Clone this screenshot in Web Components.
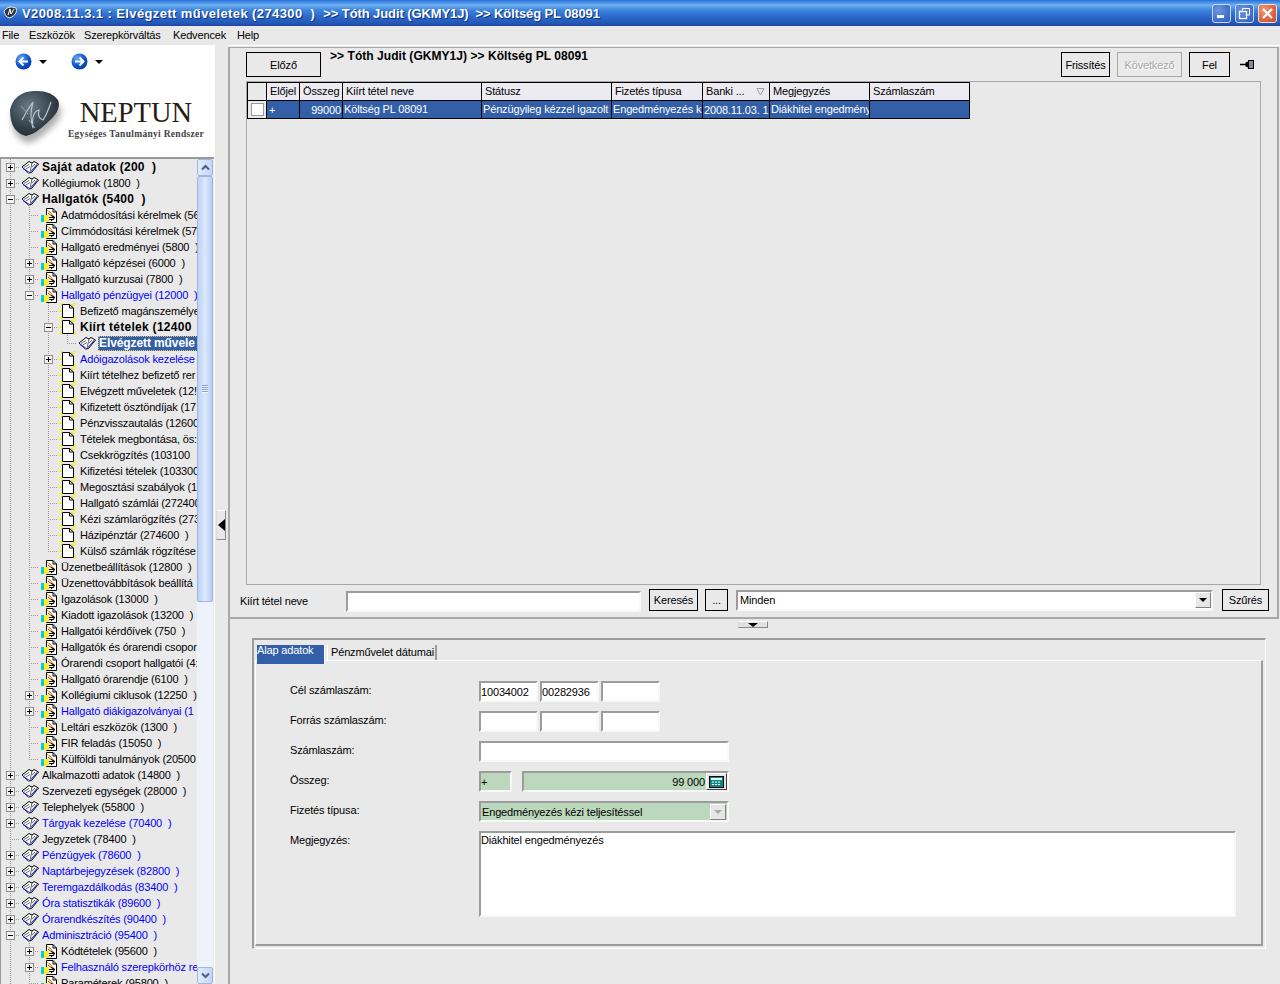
<!DOCTYPE html>
<html lang="hu"><head><meta charset="utf-8"><title>Neptun</title>
<style>
html,body{margin:0;padding:0;background:#e9e9e9}
body{width:1280px;height:984px;overflow:hidden;font:11px "Liberation Sans",Arial,sans-serif;letter-spacing:-.15px;color:#000}
</style></head><body>
<neptun-app></neptun-app>
<script>
const ICONS={
book:`<svg width="18" height="14" viewBox="0 0 18 14"><path d="M1 7 8 1.500 11 3 13 1.500 17.500 4 10.500 12.500 7.500 13Z" fill="#fff" stroke="#000"/><path d="M11 3 9 12.500M3 7.500 8 4.500M5 9 9 6.500M11 7 14 4" fill="none" stroke="#000" stroke-width=".6"/><path d="M2 8.500 7.500 12M10 11.500 16 4.500" fill="none" stroke="#2030c8" stroke-width="1.100"/></svg>`,
doc:`<svg width="18" height="17" viewBox="0 0 18 17"><path d="M6.500 1.500H13L16.500 5V15.500H6.500Z" fill="#fff" stroke="#000"/><path d="M13 1.500V5H16.500" fill="none" stroke="#000"/><path d="M8 6 13 10M9 4 12 7" stroke="#c8102e" stroke-width="1"/><path d="M7 3 14 9" stroke="#e8d000" stroke-width="1"/><path d="M8 10.500H15M8 12.500H14M11 8 15 10.500 11 14" fill="none" stroke="#000"/><rect x="1" y="8" width="4" height="7" fill="#10c8d8"/><rect x="4" y="8" width="5" height="7" fill="#f5ee30"/></svg>`,
page:`<svg width="18" height="16" viewBox="0 0 18 16"><path d="M2 0 6 4M16 0 13 3M1 15 5 12M17 15 13 12M0 8H4" stroke="#f8f000" stroke-width="1.800" fill="none"/><path d="M3.500 1.500H10.500L14.500 5V14.500H3.500Z" fill="#fff" stroke="#000"/><path d="M10.500 1.500V5H14.500" fill="none" stroke="#000"/></svg>`
};
function def(name,css,html,init){
  customElements.define(name,class extends HTMLElement{
    connectedCallback(){
      if(this.shadowRoot)return;
      const r=this.attachShadow({mode:'open'});
      r.innerHTML=`<style>${css}</style>`+(typeof html==='function'?html(this):html);
      if(init)init(this,r);
    }
  });
}
def('neptun-titlebar',`
:host{display:flex;align-items:center;height:26px;background:linear-gradient(#2a6fd8 0,#3f8ae6 2px,#6fb0ee 5px,#3c85de 10px,#2a68c8 17px,#2558b8 23px,#1d47a0 26px);color:#fff;padding-left:3px;box-sizing:border-box}
svg.l{margin-right:4px;flex:none}
.t{font-weight:bold;font-size:13px;letter-spacing:.4px;white-space:pre;text-shadow:1px 1px 0 #0f2f80;flex:1}
.t span{letter-spacing:-.1px}
.b{width:19px;height:19px;box-sizing:border-box;border:1px solid #c8d8f4;border-radius:3px;margin-right:4px;background:radial-gradient(circle at 30% 30%,#6b95e0,#2c5cc0);display:flex;align-items:center;justify-content:center}
.b.x{background:radial-gradient(circle at 30% 30%,#ee9878,#cf4420);margin-right:3px;border-color:#f0e0d8}
`,`<svg class="l" width="15" height="14" viewBox="0 0 15 14"><path d="M1 5Q5-1 13 2 15 7 9 11 3 14 1 5Z" fill="#2e3a42" stroke="#dfe6ee"/><path d="M5 9 7 3 8 8 11 3" stroke="#fff" fill="none"/></svg>
<div class="t">V2008.11.3.1 : Elvégzett műveletek (274300  )  <span>&gt;&gt; Tóth Judit (GKMY1J)  &gt;&gt; Költség PL 08091</span></div>
<div class="b"><svg width="11" height="11" viewBox="0 0 11 11"><rect x="1" y="7" width="7" height="3" fill="#fff"/></svg></div>
<div class="b"><svg width="13" height="13" viewBox="0 0 13 13"><path d="M4.500 3.500V1.500H11.500V8H9" fill="none" stroke="#fff"/><rect x="1.500" y="4.500" width="7" height="7" fill="none" stroke="#fff" stroke-width="1.300"/></svg></div>
<div class="b x"><svg width="13" height="13" viewBox="0 0 13 13"><path d="M2 2 11 11M11 2 2 11" stroke="#fff" stroke-width="2.200"/></svg></div>`);
def('neptun-menubar',`
:host{display:flex;height:19px;align-items:center;background:#e9e9e9;box-sizing:border-box;padding:0 0 2px 2px}
span{white-space:pre}
`,`<span style="width:27px">File</span><span style="width:55px">Eszközök</span><span style="width:89px">Szerepkörváltás</span><span style="width:64px">Kedvencek</span><span>Help</span>`);
def('neptun-nav',`
:host{display:flex;align-items:center;height:33px;padding-left:15px;box-sizing:border-box}
.tri{width:0;height:0;border:4px solid transparent;border-top:4px solid #000;border-bottom:0;margin-left:7px;margin-right:32px}
.tri.a{margin-right:24px}
`,()=>{
 const c=(d)=>`<svg width="17" height="17" viewBox="0 0 17 17"><defs><radialGradient id="g${d}" cx=".35" cy=".3" r=".8"><stop offset="0" stop-color="#6aa8f0"/><stop offset=".6" stop-color="#0a55d0"/><stop offset="1" stop-color="#0838a0"/></radialGradient></defs><circle cx="8.500" cy="8.500" r="8" fill="url(#g${d})"/><path d="${d=='l'?'M13 8.500H5M8.500 4.500 4.500 8.500 8.500 12.500':'M4 8.500H12M8.500 4.500 12.500 8.500 8.500 12.500'}" stroke="#fff" stroke-width="2" fill="none"/></svg>`;
 return c('l')+'<span class="tri a"></span>'+c('r')+'<span class="tri"></span>';
});
def('neptun-logo',`
:host{display:flex;height:79px;box-sizing:border-box;padding:12px 0 0 7px;font-family:"Liberation Serif",serif;color:#2a1c14;letter-spacing:0}
.w{width:136px;display:flex;flex-direction:column;align-items:center;margin-top:6px}
.n{font-size:28.5px;line-height:33px;white-space:pre}
.s{font-size:9.500px;font-weight:bold;white-space:pre;margin-top:0;letter-spacing:.3px;color:#444;line-height:11px}
`,`<svg width="61" height="62" viewBox="0 0 61 62"><defs><radialGradient id="st" cx=".4" cy=".35" r=".75"><stop offset="0" stop-color="#6b7b88"/><stop offset=".55" stop-color="#3a4852"/><stop offset="1" stop-color="#1a2228"/></radialGradient><filter id="b" x="-30%" y="-30%" width="160%" height="160%"><feGaussianBlur stdDeviation="3"/></filter></defs><path d="M4 22Q8 4 28 3 44 2 52 12 56 22 42 34 30 46 20 48 4 44 4 22Z" fill="#777" opacity=".6" filter="url(#b)" transform="translate(1 5)"/><path d="M3 20Q7 2 27 1 44 0 51 10 55 20 41 32 29 44 19 46 3 42 3 20Z" fill="url(#st)"/><path d="M15 30Q20 20 26 12 22 26 26 38 24 22 32 20 30 28 36 30 40 24 44 12" fill="none" stroke="#b8c4cc" stroke-width="1.200"/><path d="M14 16 21 24M22 30 28 38" stroke="#98a4ac" fill="none"/></svg>
<div class="w"><span class="n">NEPTUN</span><span class="s">Egységes Tanulmányi Rendszer</span></div>`);
def('neptun-node',`
:host{display:flex;height:16px;align-items:center;white-space:pre;box-sizing:border-box}
.c{flex:none;width:19px;height:16px;display:flex;align-items:center;justify-content:center}
.g{background:repeating-linear-gradient(#9a9a9a 0 1px,transparent 1px 2px) 9px 0/1px 16px no-repeat}
.h{background-image:repeating-linear-gradient(#9a9a9a 0 1px,transparent 1px 2px),repeating-linear-gradient(90deg,#9a9a9a 0 1px,transparent 1px 2px);background-size:1px 16px,10px 1px;background-position:9px 0,9px 8px;background-repeat:no-repeat}
.hu{background-image:repeating-linear-gradient(#9a9a9a 0 1px,transparent 1px 2px),repeating-linear-gradient(90deg,#9a9a9a 0 1px,transparent 1px 2px);background-size:1px 9px,10px 1px;background-position:9px 0,9px 8px;background-repeat:no-repeat}
.e{width:9px;height:9px;box-sizing:border-box;border:1px solid #8c8c8c;background:#f4f4f4;display:block}
.i{flex:none;width:19px;height:16px;display:flex;align-items:center;justify-content:center}
.t{margin-left:3px;flex:1;overflow:hidden;line-height:16px}
:host([bold]) .t{font-weight:bold;font-size:12px;letter-spacing:.28px}
:host([blue]) .t{color:#0000ff}
.t b{font-weight:inherit}
:host([sel]) .t{margin-left:2px;letter-spacing:-.1px}
:host([sel]) .t b{display:inline-block;background:#335fa8;color:#fff;outline:1px dotted #e8c060;outline-offset:-1px;padding:0 1px;min-width:100px;line-height:15px}
`,(h)=>{
 const g=(h.getAttribute('g')||'').split('');
 const exp=h.getAttribute('e');
 let s='';
 g.forEach(x=>{s+=`<span class="c ${x==='1'?'g':''}"></span>`});
 const last=h.hasAttribute('last');
 const ex=exp==='+'?`<svg class="e" viewBox="0 0 7 7"><path d="M1 3.500H6M3.500 1V6" stroke="#000"/></svg>`:exp==='-'?`<svg class="e" viewBox="0 0 7 7"><path d="M1 3.500H6" stroke="#000"/></svg>`:'';
 s+=`<span class="c ${last?'hu':'h'}">${ex}</span>`;
 s+=`<span class="i">${ICONS[h.getAttribute('i')]}</span>`;
 s+=`<span class="t"><b><slot></slot></b></span>`;
 return s;
});
def('neptun-scrollbar',`
:host{display:flex;flex-direction:column;width:16px;flex:none;background:#eef2fa;box-sizing:border-box}
.u{height:17px;flex:none;box-sizing:border-box;border:1px solid #9fb6e0;border-radius:2px;background:linear-gradient(90deg,#e4ecfb,#c4d6f6);display:flex;align-items:center;justify-content:center}
.th{height:426px;flex:none;box-sizing:border-box;border:1px solid #9fb6e0;border-radius:2px;background:linear-gradient(90deg,#bcd2f6,#dce8fc 50%,#b8cef4);display:flex;align-items:center;justify-content:center}
.sp{flex:1}
.gr{width:6px;height:8px;background:repeating-linear-gradient(#8aa0cc 0 1px,#eef3fc 1px 2px)}
`,`<div class="u"><svg width="9" height="7" viewBox="0 0 9 7"><path d="M1 5.500 4.500 2 8 5.500" fill="none" stroke="#4d6185" stroke-width="2"/></svg></div><div class="th"><span class="gr"></span></div><div class="sp"></div><div class="u"><svg width="9" height="7" viewBox="0 0 9 7"><path d="M1 1.500 4.500 5 8 1.500" fill="none" stroke="#4d6185" stroke-width="2"/></svg></div>`);
def('neptun-tree',`
:host{display:flex;height:827px;box-sizing:border-box;border-top:2px solid #9a9a9a;border-left:1px solid #9a9a9a;width:214px;background:#e9e9e9;overflow:hidden}
.l{width:196px;flex:none;overflow:hidden;height:825px}
`,`<div class="l"><slot></slot></div><neptun-scrollbar></neptun-scrollbar>`);
def('neptun-left',`
:host{display:block;width:215px;flex:none;background:#fff;height:100%;overflow:hidden}
`,`<neptun-nav></neptun-nav><neptun-logo></neptun-logo><slot></slot>`);
def('neptun-divider',`
:host{display:block;width:13px;flex:none;padding-top:465px;padding-left:1px;box-sizing:border-box}
.h{width:10px;height:30px;box-sizing:border-box;background:#e8e8ec;border:1px solid;border-color:#fff #888 #888 #ddd;display:flex;align-items:center;justify-content:center}
i{display:block;border:6px solid transparent;border-right:7px solid #000;border-left:0}
`,`<div class="h"><i></i></div>`);
def('neptun-btn',`
:host{display:flex;align-items:center;justify-content:center;box-sizing:border-box;border:1px solid #000;height:25px;flex:none;white-space:pre}
:host([off]){border-color:#a8a8a8;color:#a8a8a8;text-shadow:1px 1px 0 #fff}
`,`<slot></slot>`);
def('neptun-grid',`
:host{display:block;width:1015px;height:504px;box-sizing:border-box;border:1px solid #a8a8a8;flex:none;background:#e9e9e9}
.g{display:grid;grid-template-columns:19px 33px 43px 139px 130px 91px 67px 100px 100px;grid-auto-rows:18px;width:722px;border-top:1px solid #000;border-left:1px solid #000;margin:0}
.c{border-right:1px solid #000;border-bottom:1px solid #000;overflow:hidden;white-space:pre;display:flex;align-items:center;box-sizing:border-box}
.h{background:#ecebf1;padding:0 0 1px 3px}
.h.first{background:#e9e9e9}
.d{background:#335fa8;color:#fff;padding-left:1px;padding-bottom:2px}
.ck{background:#e9e9e9;justify-content:center}
.ck i{width:13px;height:13px;box-sizing:border-box;background:#fff;border:1px solid #9a9a9a;display:block}
.r{justify-content:flex-end;padding-right:1px;padding-bottom:0}
.s{flex:1}
`,`<div class="g">
<div class="c h first"></div><div class="c h">Előjel</div><div class="c h">Összeg</div><div class="c h">Kiírt tétel neve</div><div class="c h">Státusz</div><div class="c h">Fizetés típusa</div><div class="c h">Banki ...<span class="s"></span><svg width="9" height="9" viewBox="0 0 9 9" style="margin-right:4px"><path d="M1 1.500H8L4.500 8Z" fill="none" stroke="#a0a0a0"/></svg></div><div class="c h">Megjegyzés</div><div class="c h">Számlaszám</div>
<div class="c ck"><i></i></div><div class="c d" style="padding-left:2px;padding-bottom:0">+</div><div class="c d r">99000</div><div class="c d">Költség PL 08091</div><div class="c d">Pénzügyileg kézzel igazolt</div><div class="c d">Engedményezés k</div><div class="c d" style="padding-bottom:0">2008.11.03. 1</div><div class="c d">Diákhitel engedmény</div><div class="c d"></div>
</div>`);
def('neptun-field',`
:host{display:flex;align-items:center;box-sizing:border-box;height:21px;background:#fff;border:2px solid;border-color:#9c9c9c #f8f8f8 #f8f8f8 #9c9c9c;padding:0;white-space:pre;overflow:hidden;flex:none}
:host([green]){background:#bcd8bc}
:host([top]){align-items:flex-start;padding-top:1px}
:host([right]){justify-content:flex-end}
`,`<slot></slot>`);
def('neptun-arrow',`
:host{display:flex;width:16px;height:16px;box-sizing:border-box;flex:none;background:#e6e6e6;border:1px solid;border-color:#fff #808080 #808080 #fff;align-items:center;justify-content:center;margin-left:auto}
i{border:4px solid transparent;border-top:4px solid #000;border-bottom:0;display:block}
:host([off]) i{border-top-color:#a8a8a8}
`,`<i></i>`);
def('neptun-upper',`
:host{display:flex;flex-direction:column;box-sizing:border-box;height:572px;margin-top:1px;border:solid #a8a8a8;border-width:1px 2px 2px 2px;padding:4px 8px 0 10px;width:1051px}
.top{display:flex;margin-left:6px;width:1015px;height:25px;flex:none}
.title{font-weight:bold;font-size:12px;letter-spacing:.05px;white-space:pre;margin:-3px 0 0 9px;line-height:14px}
.sp{flex:1}
.pin{width:31px;flex:none;display:flex;align-items:center;justify-content:center;padding-left:3px;box-sizing:border-box}
neptun-grid{margin:4px 0 0 6px}
.f{display:flex;margin-top:4px;height:22px;align-items:center}
.lab{width:106px;white-space:pre;flex:none;margin-top:2px}
`,`<div class="top"><neptun-btn style="width:75px">Előző</neptun-btn><div class="title">&gt;&gt; Tóth Judit (GKMY1J) &gt;&gt; Költség PL 08091</div><div class="sp"></div>
<neptun-btn style="width:49px;margin-right:7px">Frissítés</neptun-btn><neptun-btn off style="width:65px;margin-right:7px">Következő</neptun-btn><neptun-btn style="width:41px">Fel</neptun-btn>
<div class="pin"><svg width="15" height="11" viewBox="0 0 15 11"><path d="M0 5.500H6" stroke="#000" stroke-width="1.500"/><path d="M5.500 3.500 8 2.500V8.500L5.500 7.500Z" fill="#000"/><rect x="8.500" y="1.500" width="5" height="8" fill="#889" stroke="#000"/></svg></div></div>
<neptun-grid></neptun-grid>
<div class="f"><span class="lab">Kiírt tétel neve</span><neptun-field style="width:295px;margin-top:2px"></neptun-field>
<neptun-btn style="width:49px;height:22px;margin-left:8px">Keresés</neptun-btn><neptun-btn style="width:23px;height:22px;margin-left:7px">...</neptun-btn>
<neptun-field style="width:477px;margin-left:8px;padding-left:2px">Minden<neptun-arrow></neptun-arrow></neptun-field>
<neptun-btn style="width:47px;height:22px;margin-left:9px">Szűrés</neptun-btn></div>`);
def('neptun-lower',`
:host{display:flex;flex-direction:column;flex:1;box-sizing:border-box;border-left:2px solid #a8a8a8;width:1053px}
.hd{width:30px;height:7px;margin:2px 0 0 508px;box-sizing:border-box;background:#e0e0e6;border:1px solid;border-color:#fff #888 #888 #ddd;display:flex;justify-content:center;align-items:center;flex:none}
.hd i{border:5px solid transparent;border-top:4px solid #000;border-bottom:0}
.box{margin:10px 0 0 22px;width:1014px;height:311px;box-sizing:border-box;border:solid;border-width:2px 1px 1px 2px;border-color:#9c9c9c #fff #fff #9c9c9c;padding:5px 2px 2px 1px;flex:none;display:flex;flex-direction:column}
.tabs{display:flex;height:15px;flex:none;padding-left:2px;align-items:flex-start}
.tab{white-space:pre;box-sizing:border-box}
.a{width:68px;height:19px;background:#335fa8;color:#fff;line-height:11px;position:relative;z-index:1;border-right:1px solid #fff}
.b{width:110px;height:15px;margin-left:2px;line-height:15px;padding:0 0 0 3px;border-right:2px solid #9c9c9c;border-left:1px solid #fff}
.panel{flex:1;box-sizing:border-box;border:solid;border-width:1px 2px 2px 1px;border-color:#fff #9c9c9c #9c9c9c #fff;padding:20px 0 0 34px;display:grid;grid-template-columns:189px 1fr;grid-template-rows:repeat(5,21px) 86px;row-gap:9px;align-items:start}
.lb{white-space:pre;line-height:18px}
.row{display:flex}
.calc{width:21px;height:17px;box-sizing:border-box;background:#e6e6e6;border:1px solid;border-color:#fff #404040 #404040 #fff;display:flex;align-items:center;justify-content:center;margin-left:1px}
`,`<div class="hd"><i></i></div>
<div class="box"><div class="tabs"><div class="tab a">Alap adatok</div><div class="tab b">Pénzművelet dátumai</div></div>
<div class="panel">
<span class="lb">Cél számlaszám:</span><div class="row" style="gap:2px"><neptun-field style="width:59px">10034002</neptun-field><neptun-field style="width:59px">00282936</neptun-field><neptun-field style="width:59px"></neptun-field></div>
<span class="lb">Forrás számlaszám:</span><div class="row" style="gap:2px"><neptun-field style="width:59px"></neptun-field><neptun-field style="width:59px"></neptun-field><neptun-field style="width:59px"></neptun-field></div>
<span class="lb">Számlaszám:</span><neptun-field style="width:250px"></neptun-field>
<span class="lb">Összeg:</span><div class="row"><neptun-field green style="width:33px">+</neptun-field><neptun-field green right style="width:207px;margin-left:10px;padding:0">99 000<span class="calc"><svg width="15" height="12" viewBox="0 0 15 12"><rect x=".5" y=".5" width="14" height="11" fill="#108888" stroke="#000"/><rect x="2" y="2" width="11" height="2" fill="#dff"/><path d="M3 6H12M3 8.500H12" stroke="#fff" stroke-dasharray="2 1"/></svg></span></neptun-field></div>
<span class="lb">Fizetés típusa:</span><neptun-field green style="width:250px;padding:0 1px">Engedményezés kézi teljesítéssel<neptun-arrow off></neptun-arrow></neptun-field>
<span class="lb">Megjegyzés:</span><neptun-field top style="width:757px;height:86px">Diákhitel engedményezés</neptun-field>
</div></div>`);
def('neptun-app',`
:host{display:flex;flex-direction:column;width:1280px;height:984px}
.m{display:flex;flex:1;min-height:0}
.r{display:flex;flex-direction:column;flex:1;border-top:1px solid #fff;box-sizing:border-box;min-width:0}
`,()=>{
 const rows=[
 ['',"+",'book','b','','Saját adatok (200  )'],
 ['',"+",'book','','','Kollégiumok (1800  )'],
 ['',"-",'book','b','','Hallgatók (5400  )'],
 ['1','','doc','','','Adatmódosítási kérelmek (56'],
 ['1','','doc','','','Címmódosítási kérelmek (57'],
 ['1','','doc','','','Hallgató eredményei (5800  )'],
 ['1','+','doc','','','Hallgató képzései (6000  )'],
 ['1','+','doc','','','Hallgató kurzusai (7800  )'],
 ['1','-','doc','','u','Hallgató pénzügyei (12000  )'],
 ['11','','page','','','Befizető magánszemélye'],
 ['11','-','page','b','','Kiírt tételek (12400'],
 ['111','','book','','sl','Elvégzett művele'],
 ['11','+','page','','u','Adóigazolások kezelése'],
 ['11','','page','','','Kiírt tételhez befizető rer'],
 ['11','','page','','','Elvégzett műveletek (12!'],
 ['11','','page','','','Kifizetett ösztöndíjak (17'],
 ['11','','page','','','Pénzvisszautalás (12600'],
 ['11','','page','','','Tételek megbontása, ös:'],
 ['11','','page','','','Csekkrögzítés (103100'],
 ['11','','page','','','Kifizetési tételek (103300'],
 ['11','','page','','','Megosztási szabályok (1'],
 ['11','','page','','','Hallgató számlái (272400'],
 ['11','','page','','','Kézi számlarögzítés (273'],
 ['11','','page','','','Házipénztár (274600  )'],
 ['11','','page','','l','Külső számlák rögzítése'],
 ['1','','doc','','','Üzenetbeállítások (12800  )'],
 ['1','','doc','','','Üzenettovábbítások beállítá'],
 ['1','','doc','','','Igazolások (13000  )'],
 ['1','','doc','','','Kiadott igazolások (13200  )'],
 ['1','','doc','','','Hallgatói kérdőívek (750  )'],
 ['1','','doc','','','Hallgatók és órarendi csopor'],
 ['1','','doc','','','Órarendi csoport hallgatói (4:'],
 ['1','','doc','','','Hallgató órarendje (6100  )'],
 ['1','+','doc','','','Kollégiumi ciklusok (12250  )'],
 ['1','+','doc','','u','Hallgató diákigazolványai (1'],
 ['1','','doc','','','Leltári eszközök (1300  )'],
 ['1','','doc','','','FIR feladás (15050  )'],
 ['1','','doc','','l','Külföldi tanulmányok (20500'],
 ['','+','book','','','Alkalmazotti adatok (14800  )'],
 ['','+','book','','','Szervezeti egységek (28000  )'],
 ['','+','book','','','Telephelyek (55800  )'],
 ['','+','book','','u','Tárgyak kezelése (70400  )'],
 ['','','book','','','Jegyzetek (78400  )'],
 ['','+','book','','u','Pénzügyek (78600  )'],
 ['','+','book','','u','Naptárbejegyzések (82800  )'],
 ['','+','book','','u','Teremgazdálkodás (83400  )'],
 ['','+','book','','u','Óra statisztikák (89600  )'],
 ['','+','book','','u','Órarendkészítés (90400  )'],
 ['','-','book','','u','Adminisztráció (95400  )'],
 ['1','+','doc','','','Kódtételek (95600  )'],
 ['1','+','doc','','u','Felhasználó szerepkörhöz re'],
 ['1','','doc','','','Paraméterek (95800  )'],
 ];
 const html=rows.map(([g,e,i,b,f,t])=>`<neptun-node g="${g}" e="${e}" i="${i}"${b?' bold':''}${f==='u'?' blue':''}${f.includes('s')?' sel bold':''}${f.includes('l')?' last':''}>${t}</neptun-node>`).join('');
 return `<neptun-titlebar></neptun-titlebar><neptun-menubar></neptun-menubar><div class="m"><neptun-left><neptun-tree>${html}</neptun-tree></neptun-left><neptun-divider></neptun-divider><div class="r"><neptun-upper></neptun-upper><neptun-lower></neptun-lower></div></div>`;
});
</script>
</body></html>
